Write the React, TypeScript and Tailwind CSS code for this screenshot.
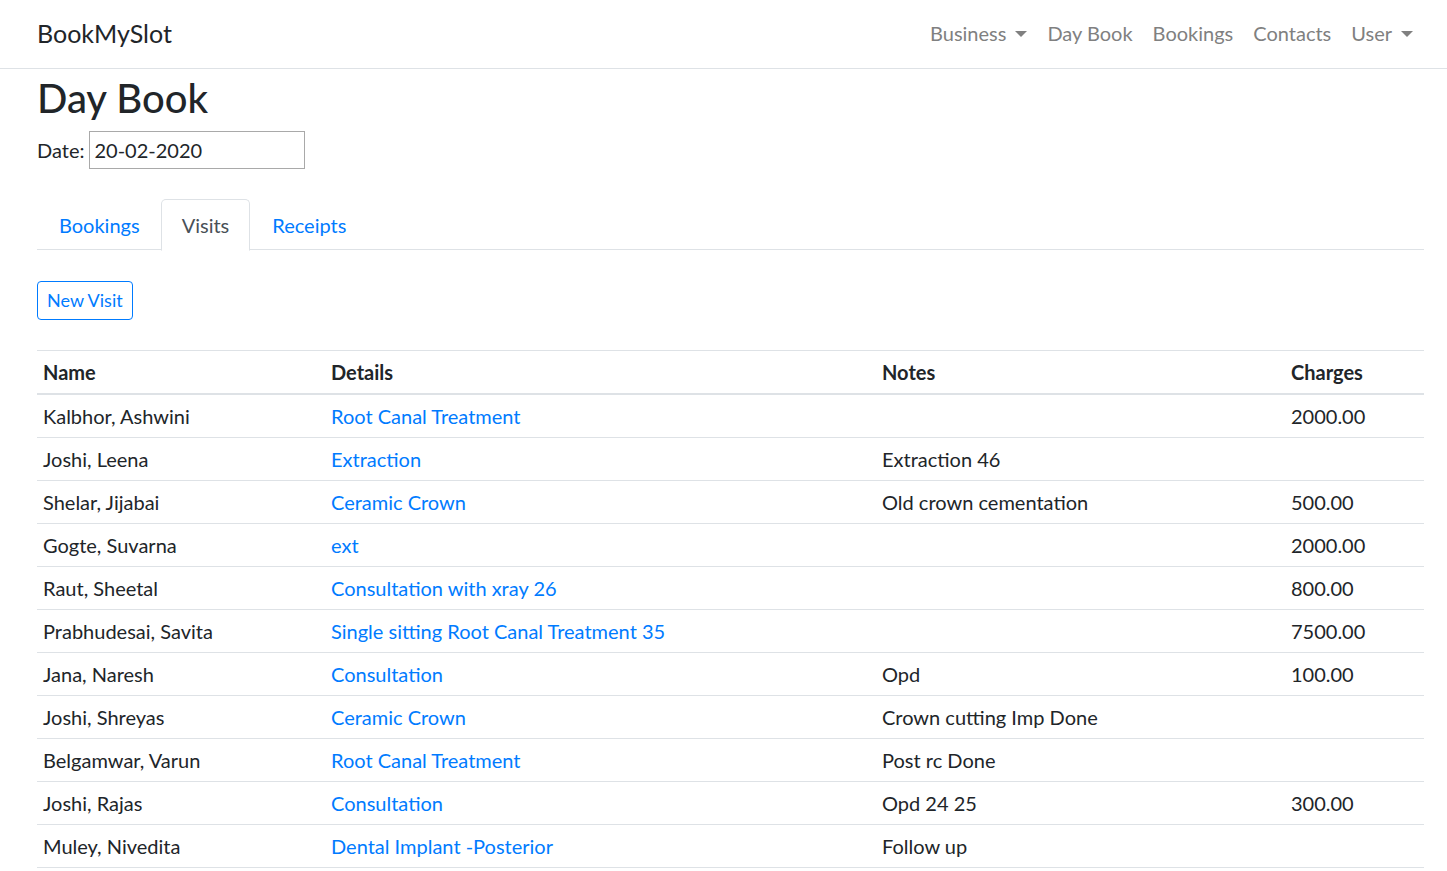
import React from "react";

const rows: [string, string, string, string][] = [
  ["Kalbhor, Ashwini", "Root Canal Treatment", "", "2000.00"],
  ["Joshi, Leena", "Extraction", "Extraction 46", ""],
  ["Shelar, Jijabai", "Ceramic Crown", "Old crown cementation", "500.00"],
  ["Gogte, Suvarna", "ext", "", "2000.00"],
  ["Raut, Sheetal", "Consultation with xray 26", "", "800.00"],
  ["Prabhudesai, Savita", "Single sitting Root Canal Treatment 35", "", "7500.00"],
  ["Jana, Naresh", "Consultation", "Opd", "100.00"],
  ["Joshi, Shreyas", "Ceramic Crown", "Crown cutting Imp Done", ""],
  ["Belgamwar, Varun", "Root Canal Treatment", "Post rc Done", ""],
  ["Joshi, Rajas", "Consultation", "Opd 24 25", "300.00"],
  ["Muley, Nivedita", "Dental Implant -Posterior", "Follow up", ""],
];

function Caret() {
  return (
    <span className="inline-block ml-[9px] align-middle w-0 h-0 border-l-[6px] border-r-[6px] border-t-[6px] border-l-transparent border-r-transparent border-t-[#808080] relative top-[-2px]" />
  );
}

export default function App() {
  return (
    <div className="min-h-screen bg-white text-[#212529] text-[20px] leading-[30px] font-['Lato','Noto_Sans',sans-serif]">
      <nav className="h-[69px] border-b border-[#dee2e6] flex items-center pl-[37px] pr-[34px]">
        <div className="text-[25px] leading-[36px] text-[#212529] pb-[2px]">BookMySlot</div>
        <div className="ml-auto flex items-center text-[#808080] gap-[20px] pb-[2px]">
          <span>
            Business
            <Caret />
          </span>
          <span>Day Book</span>
          <span>Bookings</span>
          <span>Contacts</span>
          <span>
            User
            <Caret />
          </span>
        </div>
      </nav>

      <main className="pl-[37px] pr-[23px]">
        <h2 className="text-[40px] leading-[48px] font-medium pt-[5px] mb-[9px]">Day Book</h2>
        <div className="flex items-center h-[38px]">
          <span className="mr-[5px]">Date:</span>
          <div className="w-[216px] h-[38px] border border-[#a9a9a9] flex items-center pl-[4px]">20-02-2020</div>
        </div>

        <div className="mt-[30px] flex border-b border-[#dee2e6] h-[51px]">
          <div className="px-[20px] py-[10px] text-[#007bff] border border-transparent ml-0 pl-[21px]">Bookings</div>
          <div className="px-[20px] py-[10px] text-[#495057] border border-[#dee2e6] border-b-white rounded-t-[5px] bg-white h-[52px]">Visits</div>
          <div className="px-[21px] py-[10px] text-[#007bff] border border-transparent">Receipts</div>
        </div>

        <div className="mt-[31px]">
          <button className="h-[39px] px-[9px] border border-[#007bff] rounded-[4px] text-[#007bff] text-[18px] leading-[27px]">New Visit</button>
        </div>

        <table className="mt-[30px] w-full border-collapse table-fixed">
          <colgroup>
            <col className="w-[288px]" />
            <col className="w-[551px]" />
            <col className="w-[409px]" />
            <col />
          </colgroup>
          <thead>
            <tr className="border-t border-[#dee2e6] border-b-2">
              <th className="text-left font-bold px-[6px] py-[6px]">Name</th>
              <th className="text-left font-bold px-[6px] py-[6px]">Details</th>
              <th className="text-left font-bold px-[6px] py-[6px]">Notes</th>
              <th className="text-left font-bold px-[6px] py-[6px]">Charges</th>
            </tr>
          </thead>
          <tbody>
            {rows.map((r, i) => (
              <tr key={i} className="border-b border-[#dee2e6]">
                <td className="px-[6px] py-[6px] whitespace-nowrap">{r[0]}</td>
                <td className="px-[6px] py-[6px] text-[#007bff] whitespace-nowrap">{r[1]}</td>
                <td className="px-[6px] py-[6px] whitespace-nowrap">{r[2]}</td>
                <td className="px-[6px] py-[6px] whitespace-nowrap">{r[3]}</td>
              </tr>
            ))}
          </tbody>
        </table>
      </main>
    </div>
  );
}
